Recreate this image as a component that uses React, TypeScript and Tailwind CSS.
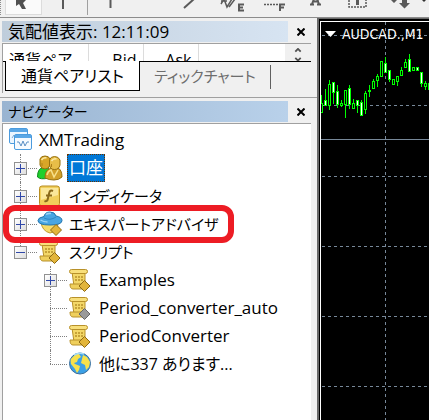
import React, { useState } from "react";

type IconName = "account" | "indicator" | "expert" | "script" | "scriptGray" | "globe";

interface TreeNode {
  label: string;
  icon: IconName;
  size?: string;
  open?: boolean;
  highlighted?: boolean;
  children?: TreeNode[];
}

const nodes: TreeNode[] = [
  { label: "口座", icon: "account", children: [] },
  { label: "インディケータ", icon: "indicator", size: "text-[15px]", children: [] },
  {
    label: "エキスパートアドバイザ",
    icon: "expert",
    size: "text-[15px]",
    highlighted: true,
    children: [],
  },
  {
    label: "スクリプト",
    icon: "script",
    size: "text-[15px]",
    open: true,
    children: [
      { label: "Examples", icon: "script", children: [] },
      { label: "Period_converter_auto", icon: "scriptGray" },
      { label: "PeriodConverter", icon: "script" },
      { label: "他に337 あります...", icon: "globe", size: "text-base" },
    ],
  },
];

// x, high, body top, body bottom, low, filled
const candles: [number, number, number, number, number, boolean][] = [
  [1, 74, 82, 91, 91, false],
  [5, 68, 79, 84, 84, true],
  [9, 59, 63, 84, 88, false],
  [13, 61, 61, 71, 82, true],
  [17, 64, 70, 83, 86, true],
  [21, 79, 82, 84, 85, false],
  [25, 69, 69, 83, 96, false],
  [29, 64, 67, 83, 87, true],
  [33, 78, 82, 87, 87, false],
  [37, 79, 79, 84, 91, true],
  [41, 79, 81, 94, 94, true],
  [45, 70, 72, 88, 92, false],
  [49, 64, 69, 70, 75, true],
  [53, 58, 60, 67, 67, false],
  [57, 53, 55, 59, 65, false],
  [61, 40, 40, 55, 55, false],
  [65, 36, 42, 51, 51, true],
  [69, 49, 49, 58, 60, true],
  [73, 58, 58, 63, 63, false],
  [77, 55, 55, 60, 64, false],
  [81, 46, 49, 54, 54, false],
  [85, 38, 41, 46, 46, false],
  [89, 33, 38, 50, 50, true],
  [93, 46, 46, 49, 49, false],
  [97, 46, 46, 49, 49, true],
  [101, 51, 51, 62, 65, true],
  [105, 60, 62, 65, 68, false],
  [109, 61, 62, 68, 68, true],
];

const Script = ({ badge }: { badge: string }) => (
  <>
    <path d="M5 5h13v14H7z" fill="#f3d768" stroke="#b8912a" />
    <rect x="2.5" y="2.5" width="18" height="4" rx="2" fill="#f8df7b" stroke="#b8912a" />
    <path d="M3 17h13l4 5H6q-3 0-3-5z" fill="#efcf5c" stroke="#b8912a" />
    <path d="M8 10h2M11 10h2M14 10h2M8 13h2M11 13h2M14 13h2" stroke="#b8912a" strokeWidth="1.5" />
    <path
      d="M17.5 13.5l5.5 5.500-5.500 5.500-5.500-5.500z"
      fill={badge}
      stroke={badge === "#999999" ? "#666" : "#8f6a13"}
    />
  </>
);

const NodeIcon = ({ name }: { name: IconName }) => (
  <svg className="h-[26px] w-[26px] shrink-0" viewBox="0 0 26 26" fill="none" aria-hidden="true">
    {name === "account" && (
      <>
        <path d="M0.500 22q0-9 6-9.500l5 1v9.500q-8 2-11-1z" fill="#1fd02c" stroke="#0c8a1c" />
        <path d="M3 4q1-3 5-3t5 3v6q-1 4-5 4t-5-4z" fill="#d9a628" stroke="#96700f" />
        <path d="M8 23q0-7 4-9l4-1h5q4 2 4 9-3 3-8 3t-9-2z" fill="#d2a02a" stroke="#96700f" />
        <path d="M12.500 5q1-3.500 5-3.500T23 5v5q-1 4.500-5.500 4.500T12.500 10z" fill="#e8be48" stroke="#96700f" />
        <path d="M4.500 5q2-3 5-2M14.500 6q2-3 5-2" stroke="#fbe9a4" strokeWidth="1.5" />
        <path d="M10 20q1-4 4-5l3 7 4-7" stroke="#f7e08a" strokeWidth="1.5" />
        <path d="M5 8v3M14.500 9v3" stroke="#b0801a" />
      </>
    )}
    {name === "indicator" && (
      <>
        <rect x="2.5" y="3" width="20" height="20" rx="2.5" fill="#f1cf5b" stroke="#b88d20" />
        <path d="M4 5h17v7L4 17z" fill="#fae79a" />
        <path d="M16 8q-3-1.500-3.800 2l-1.400 6q-.6 3-3.300 2M9 12.500h6" stroke="#8a691a" strokeWidth="2" />
      </>
    )}
    {name === "expert" && (
      <>
        <path d="M4 11q1 9 9 11 8-1 8-11z" fill="#f7db69" stroke="#c29a2c" />
        <path d="M1 9.500q0-3 6-4 1-4.500 6-4.500t6 4q6 1 6 4.500 0 4.500-12 4.500T1 9.500z" fill="#49a5e2" stroke="#2274ad" />
        <path d="M7 7q6 3 12-1" stroke="#2f86c4" />
        <path d="M9 3.500q2-1.500 5-1M3.500 9q3 2 7 2" stroke="#9bd3f5" strokeWidth="1.5" />
        <path d="M19 13.500l5.500 5.500-5.500 5.500-5.500-5.500z" fill="#e2b53b" stroke="#8f6a13" />
      </>
    )}
    {name === "script" && <Script badge="#e2b53b" />}
    {name === "scriptGray" && <Script badge="#999999" />}
    {name === "globe" && (
      <>
        <circle cx="13" cy="12.5" r="10.500" fill="#3ba0e6" stroke="#3a6f9c" />
        <path d="M4 8q5-6 8-5l2 3-3 2-1 3-3 1 1 1 5 2-1 4-2 3-2-4-4-5q-1-3 0-5z" fill="#f7e14a" />
        <path d="M16 4l4 2 3 5-1 5-3 3-1-5-4-2 1-4z" fill="#f7e14a" />
        <path d="M7 4q5-3 10-1" stroke="#a4daf8" strokeWidth="1.5" />
      </>
    )}
  </svg>
);

const TerminalIcon = () => (
  <svg className="h-[26px] w-[26px] shrink-0" viewBox="0 0 26 26" fill="none" aria-hidden="true">
    <rect x="0.5" y="1.5" width="18" height="15" rx="1.5" fill="#eaf5ff" stroke="#4b9bde" />
    <path d="M1 3.500h17" stroke="#5aa7e6" strokeWidth="3" />
    <path d="M3 11l2-3 2 4 2-4" stroke="#7aa9d6" />
    <rect x="5.5" y="7.5" width="17" height="15" rx="1.5" fill="#f5faff" stroke="#4b9bde" />
    <path d="M6 9.500h16" stroke="#5aa7e6" strokeWidth="3" />
    <path d="M8 15h2l2 4 2-5 2 5 2-4h2" stroke="#5a8fc5" />
  </svg>
);

const Toggle = ({ open, label, onClick }: { open: boolean; label: string; onClick: () => void }) => (
  <button
    aria-label={label}
    aria-expanded={open}
    onClick={onClick}
    className="relative flex h-[13px] w-[13px] items-center justify-center border border-[#919191] bg-gradient-to-br from-white to-[#dedede]"
  >
    <svg width="9" height="9" viewBox="0 0 9 9" stroke="#3048a8" aria-hidden="true">
      <path d={open ? "M0 4.500h9" : "M0 4.500h9M4.500 0v9"} />
    </svg>
  </button>
);

interface TreeItemProps {
  node: TreeNode;
  last: boolean;
  selected: string;
  onSelect: (label: string) => void;
}

const TreeItem = ({ node, last, selected, onSelect }: TreeItemProps) => {
  const [isOpen, setIsOpen] = useState(Boolean(node.open));
  const isSelected = selected === node.label;

  return (
    <li role="treeitem" aria-selected={isSelected}>
      <div className="relative flex h-7 items-center">
        {/* Connector lines and expander */}
        <div className="relative flex h-full w-[34px] shrink-0 items-center justify-center">
          <span
            className={`absolute left-[17px] top-0 border-l border-dotted border-[#808080] ${
              last ? "h-1/2" : "h-full"
            }`}
          />
          <span className="absolute left-[17px] right-0 top-1/2 border-t border-dotted border-[#808080]" />
          {node.children && (
            <Toggle open={isOpen} label={node.label} onClick={() => setIsOpen((prev) => !prev)} />
          )}
        </div>
        <NodeIcon name={node.icon} />
        <button
          onClick={() => onSelect(node.label)}
          className={`ml-1 h-7 whitespace-nowrap px-0.5 ${node.size ?? "text-[17px]"} ${
            isSelected ? "bg-[#0078d7] text-white outline-1 -outline-offset-1 outline-dotted outline-[#663300]" : ""
          }`}
        >
          {node.label}
        </button>
        {node.highlighted && (
          <span className="pointer-events-none absolute -inset-y-[5px] left-0 z-10 w-[231px] rounded-xl border-[6px] border-[#ed1c24]" />
        )}
      </div>
      {isOpen && node.children && node.children.length > 0 && (
        <ul role="group" className="pl-[30px]">
          {node.children.map((child, i) => (
            <TreeItem
              key={child.label}
              node={child}
              last={i === node.children!.length - 1}
              selected={selected}
              onSelect={onSelect}
            />
          ))}
        </ul>
      )}
    </li>
  );
};

const PanelTitle = ({ title, className }: { title: string; className: string }) => (
  <div className="flex h-[21px] pl-0.5 pr-[3px]">
    <h2 className={`flex flex-1 items-center whitespace-nowrap bg-gradient-to-r pl-1.5 font-normal ${className}`}>
      {title}
    </h2>
    <button aria-label="閉じる" className="flex w-[26px] items-center justify-center">
      <svg width="8" height="8" viewBox="0 0 8 8" stroke="#000" strokeWidth="2" aria-hidden="true">
        <path d="M0.500 0.500l7 7M7.500 0.500l-7 7" />
      </svg>
    </button>
  </div>
);

const tools = [
  { name: "垂直線", icon: <path d="M22.500 0v8" strokeWidth="2" /> },
  { name: "水平線", icon: null },
  { name: "トレンドライン", icon: <path d="M14 8l10-9" strokeWidth="2" /> },
  {
    name: "チャネル",
    icon: (
      <>
        <path d="M10 4l3-5 3 8 5-8M18 7l6-8M10 1l6 0" strokeWidth="1.5" />
        <path d="M33 4.500h-5v6h5M28 7.500h4" strokeWidth="2" />
      </>
    ),
  },
  {
    name: "フィボナッチ",
    icon: (
      <>
        <path d="M12 4.500h15" strokeWidth="1.5" strokeDasharray="2 1" />
        <path d="M33 4.500h-5v6.500M28 7.500h4" strokeWidth="2" />
      </>
    ),
  },
  { name: "テキスト", icon: <path d="M19 4l2-5M26 4l-2-5M20 1.500h6M17 4.500h4M24 4.500h4" strokeWidth="2" /> },
  {
    name: "ラベル",
    icon: (
      <>
        <path d="M15 0v7h17V0" strokeWidth="1.5" strokeDasharray="2 1" />
        <path d="M23.500 0v5" strokeWidth="3" />
      </>
    ),
  },
  {
    name: "矢印",
    icon: <path d="M16 0l3 3 3-3zM24 3h11l-5.500 5.500zM27 0h5v4h-5z" fill="#5a5a5a" stroke="none" />,
  },
];

const Toolbar = () => (
  <div className="flex h-[18px] overflow-hidden border-b border-[#8c8c8c] bg-[#f0f0f0]">
    <span className="mr-[3px] h-[15px] w-0.5 border-l border-dotted border-[#8c8c8c]" />
    <button aria-label="カーソル" className="h-[15px] w-[37px] border-x border-b border-[#dcdcdc] bg-[#fafafa]">
      <svg width="35" height="14" viewBox="0 0 35 14" aria-hidden="true">
        <path d="M10 0v6l3-2 3 5h4l-3-6 3-3z" fill="#505050" />
      </svg>
    </button>
    <button aria-label="十字カーソル" className="h-[15px] w-[46px] border-r border-[#a0a0a0]">
      <svg width="44" height="15" viewBox="0 0 44 15" aria-hidden="true">
        <path d="M21 0v9" stroke="#5a5a5a" strokeWidth="2" />
      </svg>
    </button>
    {tools.map((tool) => (
      <button key={tool.name} aria-label={tool.name} className="h-[15px] w-[41px] shrink-0">
        <svg width="41" height="15" viewBox="0 0 41 15" fill="none" stroke="#5a5a5a" aria-hidden="true">
          {tool.icon}
        </svg>
      </button>
    ))}
    <button aria-label="その他の矢印" className="h-[15px] w-3">
      <svg width="12" height="15" viewBox="0 0 12 15" aria-hidden="true">
        <path d="M6 0h4l-2 2z" fill="#303030" />
      </svg>
    </button>
  </div>
);

const MarketWatch = () => (
  <section className="pt-[3px]">
    <PanelTitle title="気配値表示: 12:11:09" className="from-[#bfcddb] to-[#d7e4f2] text-[17px]" />
    <div className="ml-0.5 mr-[6px] mt-px border-l border-t border-[#a0a0a0]">
      <div className="flex h-[17px] overflow-hidden bg-white">
        <table className="h-8 table-fixed text-base">
          <thead>
            <tr className="h-8">
              <th className="w-[85px] border-r border-[#dcdcdc] pl-1.5 text-left font-normal">通貨ペア</th>
              <th className="w-[55px] border-r border-[#dcdcdc] pr-1.5 text-right font-normal">Bid</th>
              <th className="w-[55px] border-r border-[#dcdcdc] pr-1.5 text-right font-normal">Ask</th>
            </tr>
          </thead>
        </table>
        <div className="ml-auto flex w-[26px] flex-col items-center gap-1 bg-[#f0f0f0] pt-1">
          <svg width="8" height="5" viewBox="0 0 8 5" fill="none" stroke="#505050" strokeWidth="2" aria-hidden="true">
            <path d="M1 4l3-3 3 3" />
          </svg>
          <svg width="8" height="5" viewBox="0 0 8 5" fill="none" stroke="#505050" strokeWidth="2" aria-hidden="true">
            <path d="M1 1l3 3 3-3" />
          </svg>
        </div>
      </div>
      <div role="tablist" className="flex h-8 pb-[2px] text-base">
        <span className="w-0.5 border-t border-black" />
        <button
          role="tab"
          aria-selected="true"
          className="w-[135px] whitespace-nowrap border-x border-b border-black bg-white"
        >
          通貨ペアリスト
        </button>
        <div className="flex flex-1 items-center border-t border-black">
          <button
            role="tab"
            aria-selected="false"
            className="h-6 w-[131px] whitespace-nowrap border-r border-[#606060] text-[15px] text-[#6d6d6d]"
          >
            ティックチャート
          </button>
        </div>
      </div>
    </div>
  </section>
);

const Navigator = () => {
  const [selected, setSelected] = useState("口座");

  return (
    <section className="mt-1 flex flex-1 flex-col border-t border-[#a0a0a0] pt-[3px]">
      <PanelTitle title="ナビゲーター" className="from-[#99b4d1] to-[#b9d1ea] text-sm" />
      <div className="ml-0.5 mr-[6px] mt-px flex-1 border-l border-t border-[#a0a0a0] bg-white pt-0.5 text-[17px] leading-7">
        <div className="flex h-7 items-center pl-1.5">
          <TerminalIcon />
          <span className="ml-0.5 px-0.5">XMTrading</span>
        </div>
        <ul role="tree">
          {nodes.map((node, i) => (
            <TreeItem
              key={node.label}
              node={node}
              last={i === nodes.length - 1}
              selected={selected}
              onSelect={setSelected}
            />
          ))}
        </ul>
      </div>
    </section>
  );
};

const Chart = () => (
  <main className="relative flex-1 border-l-2 border-t border-[#696969] bg-black pl-px pt-0.5">
    <div className="relative h-full border-l border-t border-white">
      <svg className="absolute inset-0 h-full w-full" shapeRendering="crispEdges" aria-hidden="true">
        <g stroke="#778899" strokeDasharray="3 3">
          {[13, 83, 154, 224, 294, 364].map((y) => (
            <line key={y} x1="1" x2="100%" y1={y + 0.5} y2={y + 0.5} />
          ))}
          <line x1="64.5" x2="64.5" y1="0" y2="100%" />
        </g>
        <line x1="0" x2="100%" y1="117.5" y2="117.5" stroke="#778899" />
        {candles.map(([x, high, top, bottom, low, filled]) => (
          <g key={x} stroke="#00ff00" transform="translate(-1 -1)">
            <line x1={x + 0.5} x2={x + 0.5} y1={high} y2={low + 1} />
            <rect x={x - 0.5} y={top + 0.5} width="2" height={bottom - top} fill={filled ? "#fff" : "#000"} />
          </g>
        ))}
      </svg>
      <div className="relative flex items-center gap-1.5 whitespace-nowrap pl-1 font-['DejaVu_Sans_Condensed','DejaVu_Sans',sans-serif] text-sm leading-6 text-white">
        <svg width="11" height="6" viewBox="0 0 11 6" aria-hidden="true">
          <path d="M0 0h11l-5.500 6z" fill="#fff" />
        </svg>
        AUDCAD.,M1
      </div>
    </div>
  </main>
);

export default function App() {
  return (
    <div className="flex min-h-screen flex-col overflow-hidden bg-white pr-[3px] font-['Open_Sans','Noto_Sans_CJK_JP',sans-serif] text-black [font-feature-settings:'palt']">
      <Toolbar />
      <div className="flex flex-1">
        <aside className="flex w-[317px] shrink-0 flex-col bg-[#f0f0f0]">
          <MarketWatch />
          <Navigator />
        </aside>
        <Chart />
      </div>
    </div>
  );
}
